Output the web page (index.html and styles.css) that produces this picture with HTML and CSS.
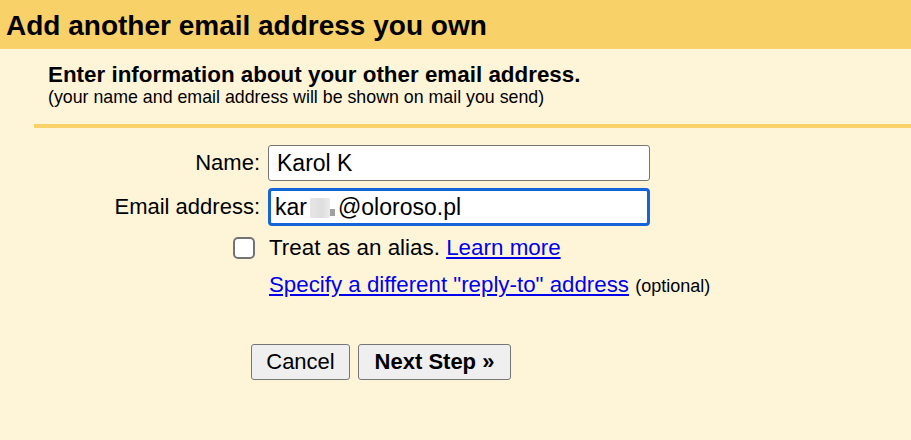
FILE: index.html
```html
<!DOCTYPE html>
<html>
<head>
<meta charset="utf-8">
<link rel="stylesheet" href="styles.css">
</head>
<body>
<div class="header"><h1 class="title">Add another email address you own</h1></div>
<div class="content">
  <div class="intro">
    <div class="intro-head">Enter information about your other email address.</div>
    <div class="intro-sub">(your name and email address will be shown on mail you send)</div>
  </div>
  <div class="rule"></div>
  <div class="form">
    <label class="label">Name:</label>
    <div class="field"><div class="input">Karol K</div></div>
    <label class="label">Email address:</label>
    <div class="field"><div class="input focus">kar<span class="blur"><span class="b1"></span><span class="b2"></span></span>@oloroso.pl</div></div>
  </div>
  <div class="options">
    <div class="opt-row">
      <input type="checkbox" class="check">
      <span class="opt-text">Treat as an alias. <a href="#" class="link">Learn more</a></span>
    </div>
    <div class="reply-row">
      <a href="#" class="link">Specify a different "reply-to" address</a> <span class="optional">(optional)</span>
    </div>
  </div>
  <div class="buttons">
    <button class="btn">Cancel</button>
    <button class="btn primary">Next Step »</button>
  </div>
</div>
</body>
</html>
```
FILE: styles.css
```css
html, body {
  margin: 0;
  padding: 0;
  background: #fef5d9;
  font-family: "Liberation Sans", Arial, sans-serif;
  color: #000;
  width: 911px;
  height: 440px;
  overflow: hidden;
}
.header {
  background: #f9d169;
  height: 49px;
  display: flex;
  align-items: center;
  padding-left: 6px;
}
.title {
  margin: 0;
  font-size: 28px;
  font-weight: bold;
  line-height: 32px;
  padding-top: 2px;
}
.content {
  padding-top: 14px;
}
.intro {
  padding-left: 48px;
}
.intro-head {
  font-size: 22.4px;
  font-weight: bold;
  line-height: 24px;
}
.intro-sub {
  font-size: 17.8px;
  line-height: 20px;
}
.rule {
  margin-left: 34px;
  margin-top: 17px;
  height: 4px;
  background: #f9d169;
}
.form {
  display: grid;
  grid-template-columns: 260px 382px;
  column-gap: 8px;
  row-gap: 7px;
  margin-top: 17px;
  align-items: center;
}
.label {
  text-align: right;
  font-size: 22px;
}
.input {
  box-sizing: border-box;
  height: 36px;
  background: #fff;
  border: 1px solid #767676;
  border-radius: 3px;
  font-size: 23px;
  padding-left: 8px;
  display: flex;
  align-items: center;
  white-space: nowrap;
}
.input.focus {
  height: 38px;
  border: 3px solid #1565d8;
  border-radius: 4px;
  padding-left: 4px;
}
.blur {
  display: inline-flex;
  align-items: flex-end;
  height: 22px;
  margin: 0 3px 0 3px;
}
.b1 {
  display: inline-block;
  width: 20px;
  height: 20px;
  background: linear-gradient(90deg, #e6e6e6, #dedede 60%, #ececec);
}
.b2 {
  display: inline-block;
  width: 5px;
  height: 7px;
  margin-bottom: 2px;
  background: #a0a0a0;
}
.options {
  padding-left: 233px;
  margin-top: 10px;
}
.opt-row {
  display: flex;
  align-items: center;
  height: 24px;
}
.check {
  appearance: none;
  -webkit-appearance: none;
  box-sizing: border-box;
  width: 22px;
  height: 22px;
  margin: 0 14px 0 0;
  border: 2px solid #737373;
  border-radius: 5px;
  background: #fff;
}
.opt-text {
  font-size: 22.4px;
}
.link {
  color: #0000ee;
  text-decoration: underline;
}
.reply-row {
  padding-left: 36px;
  margin-top: 12px;
  font-size: 22.3px;
  line-height: 26px;
}
.optional {
  font-size: 18px;
}
.buttons {
  display: flex;
  gap: 8px;
  padding-left: 251px;
  margin-top: 45px;
}
.btn {
  box-sizing: border-box;
  height: 36px;
  background: #efefef;
  border: 1px solid #767676;
  border-radius: 3px;
  font-family: "Liberation Sans", Arial, sans-serif;
  font-size: 22px;
  color: #000;
  padding: 0;
  width: 99px;
}
.btn.primary {
  font-weight: bold;
  width: 153px;
}
```
